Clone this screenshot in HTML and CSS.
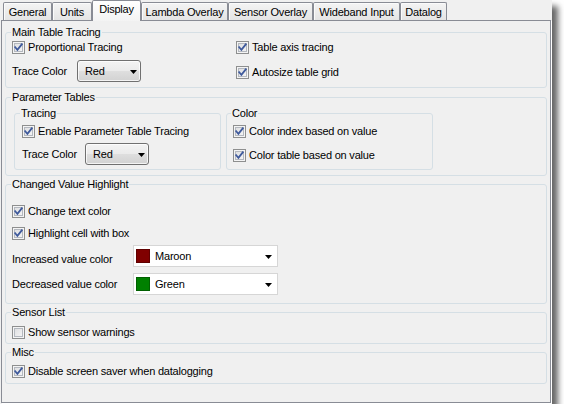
FILE: index.html
```html
<!DOCTYPE html>
<html lang="en">
<head>
<meta charset="utf-8">
<title>Display settings</title>
<link rel="stylesheet" href="styles.css">
</head>
<body>
<div class="window">
  <div class="tabs">
    <div class="tab tab-general">General</div>
    <div class="tab tab-units">Units</div>
    <div class="tab tab-display active">Display</div>
    <div class="tab tab-lambda">Lambda Overlay</div>
    <div class="tab tab-sensor">Sensor Overlay</div>
    <div class="tab tab-wideband">Wideband Input</div>
    <div class="tab tab-datalog">Datalog</div>
  </div>

  <div class="panel">
    <fieldset class="group group-main">
      <legend>Main Table Tracing</legend>
      <div class="main-cols">
        <div class="stack stack-main-left">
          <div class="check"><span class="cb"><svg class="tick" viewBox="0 0 11 11"><path d="M2.2 5.2 4.4 7.9 8.8 2.3"/></svg></span><span>Proportional Tracing</span></div>
          <div class="field field-main"><span class="field-label">Trace Color</span><div class="combo-button"><span>Red</span><svg class="arrow" viewBox="0 0 7 4"><path d="M0 0h7L3.5 4z"/></svg></div></div>
        </div>
        <div class="stack stack-main-right">
          <div class="check"><span class="cb"><svg class="tick" viewBox="0 0 11 11"><path d="M2.2 5.2 4.4 7.9 8.8 2.3"/></svg></span><span>Table axis tracing</span></div>
          <div class="check"><span class="cb"><svg class="tick" viewBox="0 0 11 11"><path d="M2.2 5.2 4.4 7.9 8.8 2.3"/></svg></span><span>Autosize table grid</span></div>
        </div>
      </div>
    </fieldset>

    <fieldset class="group group-params">
      <legend>Parameter Tables</legend>
      <div class="subgroups">
        <fieldset class="subgroup subgroup-tracing">
          <legend>Tracing</legend>
          <div class="stack stack-tracing">
            <div class="check"><span class="cb"><svg class="tick" viewBox="0 0 11 11"><path d="M2.2 5.2 4.4 7.9 8.8 2.3"/></svg></span><span>Enable Parameter Table Tracing</span></div>
            <div class="field field-sub"><span class="field-label">Trace Color</span><div class="combo-button"><span>Red</span><svg class="arrow" viewBox="0 0 7 4"><path d="M0 0h7L3.5 4z"/></svg></div></div>
          </div>
        </fieldset>
        <fieldset class="subgroup subgroup-color">
          <legend>Color</legend>
          <div class="stack stack-color">
            <div class="check"><span class="cb"><svg class="tick" viewBox="0 0 11 11"><path d="M2.2 5.2 4.4 7.9 8.8 2.3"/></svg></span><span>Color index based on value</span></div>
            <div class="check"><span class="cb"><svg class="tick" viewBox="0 0 11 11"><path d="M2.2 5.2 4.4 7.9 8.8 2.3"/></svg></span><span>Color table based on value</span></div>
          </div>
        </fieldset>
      </div>
    </fieldset>

    <fieldset class="group group-highlight">
      <legend>Changed Value Highlight</legend>
      <div class="stack stack-highlight">
        <div class="check"><span class="cb"><svg class="tick" viewBox="0 0 11 11"><path d="M2.2 5.2 4.4 7.9 8.8 2.3"/></svg></span><span>Change text color</span></div>
        <div class="check check-box"><span class="cb"><svg class="tick" viewBox="0 0 11 11"><path d="M2.2 5.2 4.4 7.9 8.8 2.3"/></svg></span><span>Highlight cell with box</span></div>
        <div class="field field-color"><span class="field-label label-low">Increased value color</span><div class="combo-color"><span class="swatch swatch-maroon"></span><span>Maroon</span><svg class="arrow" viewBox="0 0 7 4"><path d="M0 0h7L3.5 4z"/></svg></div></div>
        <div class="field field-color field-decreased"><span class="field-label">Decreased value color</span><div class="combo-color"><span class="swatch swatch-green"></span><span>Green</span><svg class="arrow" viewBox="0 0 7 4"><path d="M0 0h7L3.5 4z"/></svg></div></div>
      </div>
    </fieldset>

    <fieldset class="group group-small group-sensor">
      <legend>Sensor List</legend>
      <div class="check"><span class="cb"></span><span>Show sensor warnings</span></div>
    </fieldset>

    <fieldset class="group group-small group-misc">
      <legend>Misc</legend>
      <div class="check"><span class="cb"><svg class="tick" viewBox="0 0 11 11"><path d="M2.2 5.2 4.4 7.9 8.8 2.3"/></svg></span><span>Disable screen saver when datalogging</span></div>
    </fieldset>
  </div>
</div>
</body>
</html>
```

FILE: styles.css
```css
* { box-sizing: border-box; }

html, body {
  margin: 0;
  background: #ffffff;
}

body {
  font-family: "Liberation Sans", Arial, sans-serif;
  font-size: 11px;
  line-height: 13px;
  letter-spacing: -0.2px;
  color: #000;
}

.window {
  width: 552px;
  height: 404px;
  padding-left: 1px;
  background: #f0f0f0;
  box-shadow: 6px 6px 6px rgba(0, 0, 0, 0.6);
}

/* ---------- tabs ---------- */
.tabs {
  display: flex;
  align-items: flex-end;
  height: 20px;
  padding-left: 2px;
}

.tab {
  flex: none;
  height: 18px;
  padding-top: 3px;
  border: 1px solid #898c95;
  border-bottom: none;
  border-radius: 2px 2px 0 0;
  background: linear-gradient(#f4f4f4, #e4e4e4);
  box-shadow: inset 1px 1px 0 #fbfbfb;
  text-align: center;
  white-space: nowrap;
}

.tab.active {
  position: relative;
  z-index: 1;
  height: 21px;
  margin-bottom: -1px;
  padding-top: 2px;
  background: linear-gradient(#ffffff, #f3f3f3);
  box-shadow: none;
}

.tab-general { width: 49px; }
.tab-units { width: 40px; }
.tab-display { width: 49px; }
.tab-lambda { width: 87px; }
.tab-sensor { width: 85px; }
.tab-wideband { width: 87px; }
.tab-datalog { width: 47px; }

/* ---------- panel ---------- */
.panel {
  width: 550px;
  height: 383px;
  border: 1px solid #898c95;
  box-shadow: 1px 1px 0 #ffffff;
  padding: 5px 3px 0;
  display: flex;
  flex-direction: column;
  gap: 2px;
}

/* ---------- group boxes ---------- */
.group,
.subgroup {
  flex: none;
  margin: 0;
  min-width: 0;
  border: 1px solid #d5dfe5;
  border-radius: 3px;
}

.group legend,
.subgroup legend {
  padding: 0 1px;
  margin-left: -1px;
  line-height: 13px;
  height: 13px;
}

.group-main {
  height: 62px;
  padding: 2px 6px 0;
}

.group-params {
  height: 85px;
  margin-top: 1px;
  padding: 3px 0 0 8px;
}

.group-params > legend { margin-left: -3px; }

.group-highlight {
  height: 126px;
  padding: 14px 6px 0;
}

.group-small {
  height: 38px;
  padding: 6px 6px 0;
}

.group-sensor { padding-top: 7px; }

.subgroups {
  display: flex;
  gap: 5px;
}

.subgroup {
  width: 207px;
  height: 63px;
  padding: 5px 6px 0 6px;
}

.subgroup legend { margin-left: -2px; }

.subgroup-tracing { padding-left: 7px; }

/* ---------- stacks ---------- */
.main-cols {
  display: grid;
  grid-template-columns: 224px 1fr;
}

.stack {
  display: flex;
  flex-direction: column;
}

.stack-main-left { gap: 6px; }
.stack-main-right { gap: 12px; }
.stack-tracing { gap: 5px; }
.stack-color { gap: 11px; }
.stack-highlight { gap: 5px; }
.check-box { margin-top: 4px; }
.field-decreased { margin-top: 1px; }

/* ---------- checkbox ---------- */
.check {
  display: flex;
  align-items: center;
  gap: 3px;
  height: 13px;
  white-space: nowrap;
}

.cb {
  flex: none;
  width: 13px;
  height: 13px;
  border: 1px solid #8e8f8f;
  background: linear-gradient(135deg, #d9dadc, #f9f9f9);
  box-shadow: inset 0 0 0 1px #f4f4f4, inset 0 0 0 2px #b4b8bf;
}

.tick {
  display: block;
  width: 11px;
  height: 11px;
  fill: none;
  stroke: #3f5a9c;
  stroke-width: 1.8;
  stroke-linecap: square;
}

/* ---------- fields / combos ---------- */
.field {
  display: flex;
  align-items: center;
  height: 22px;
  white-space: nowrap;
}

.field-label { flex: none; }
.field-main .field-label { width: 65px; }
.field-sub .field-label { width: 63px; }
.field-color .field-label { width: 121px; }

.label-low {
  align-self: flex-end;
  padding-bottom: 1px;
}

.combo-button {
  flex: none;
  width: 64px;
  height: 22px;
  display: flex;
  align-items: center;
  justify-content: space-between;
  padding: 0 3px 0 7px;
  border: 1px solid #707070;
  border-radius: 3px;
  background: linear-gradient(#f3f3f3, #ebebeb 48%, #dedede 52%, #d2d2d2);
  box-shadow: inset 0 0 0 1px rgba(255, 255, 255, 0.75);
}

.combo-color {
  flex: none;
  width: 145px;
  height: 22px;
  display: flex;
  align-items: center;
  padding: 0 5px 0 2px;
  background: #ffffff;
  border: 1px solid #d6d6d6;
}

.combo-color .arrow { margin-left: auto; }

.arrow {
  display: block;
  width: 7px;
  height: 4px;
  fill: #000;
  margin-top: 2px;
}

.swatch {
  flex: none;
  width: 14px;
  height: 14px;
  margin-right: 5px;
  border: 1px solid rgba(0, 0, 0, 0.25);
}

.swatch-maroon { background: #800000; }
.swatch-green { background: #008000; }
```
